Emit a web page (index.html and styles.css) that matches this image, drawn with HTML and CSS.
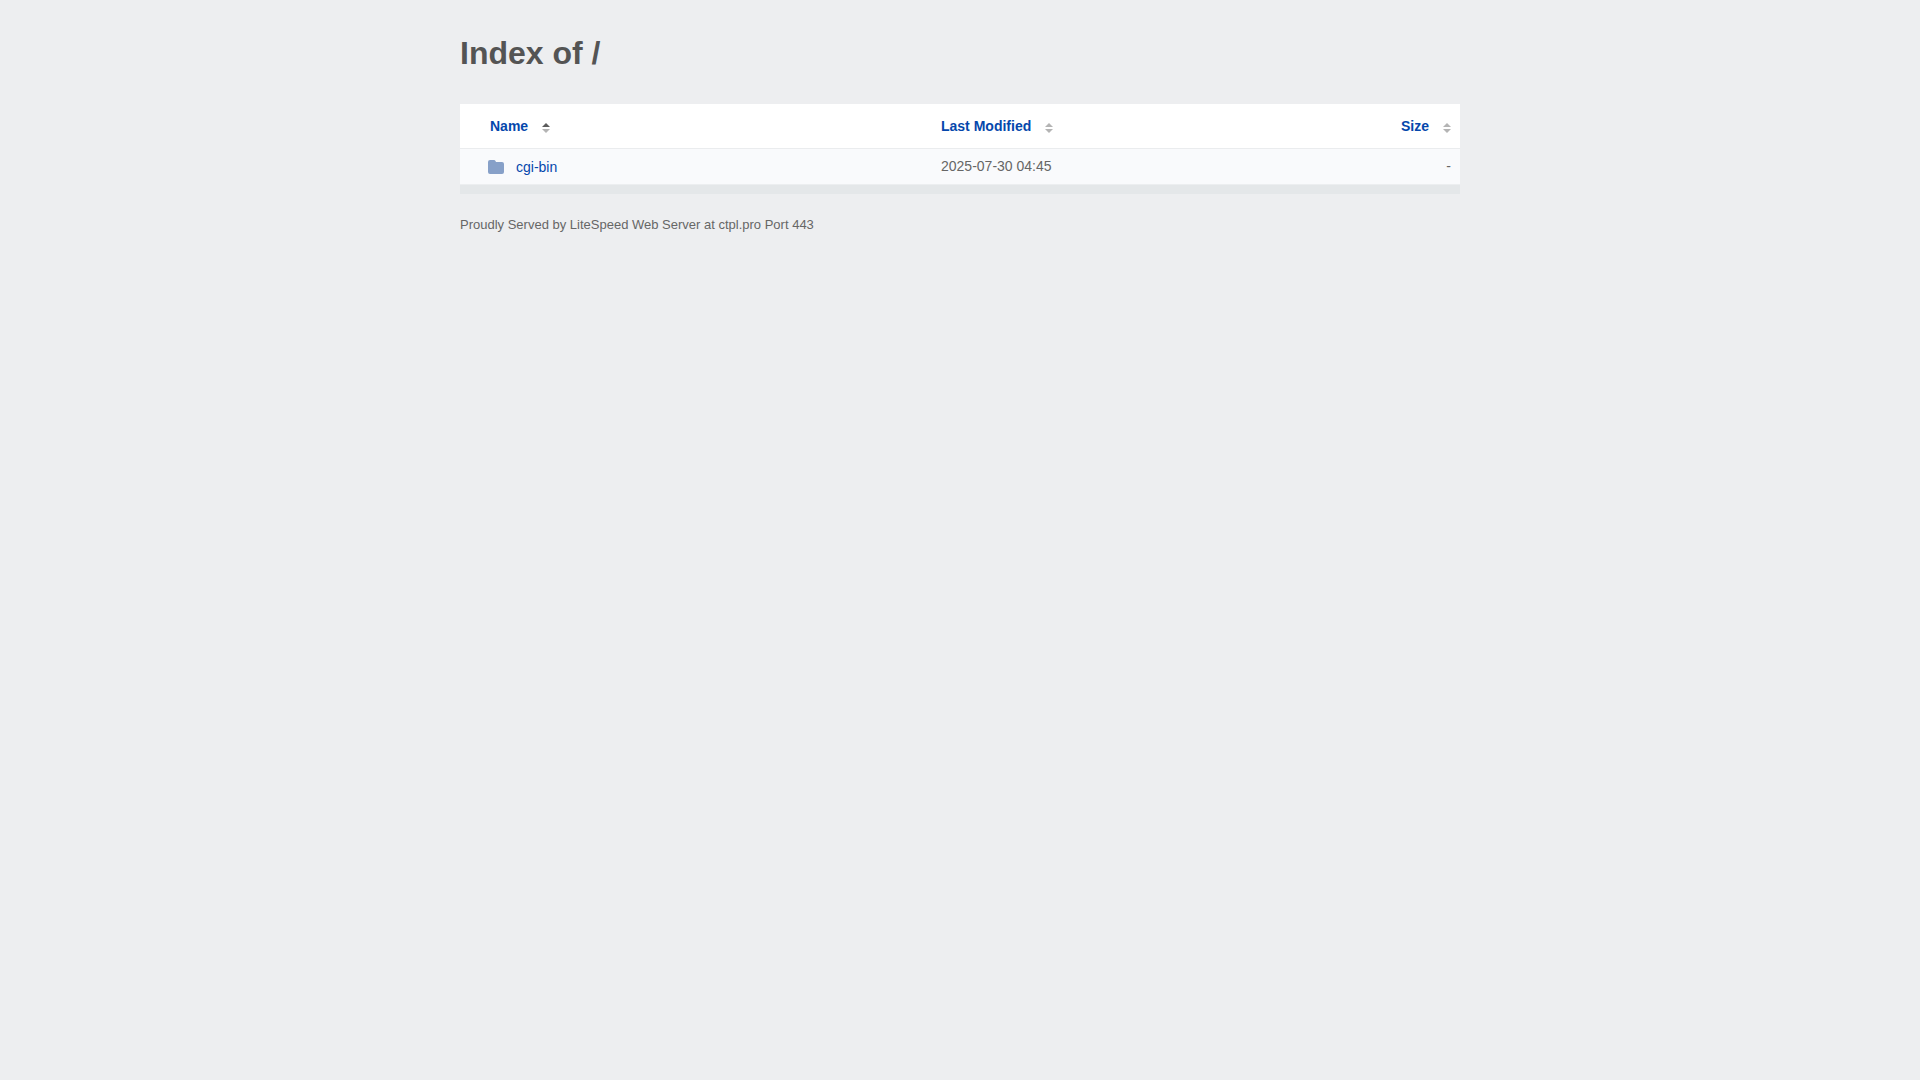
FILE: index.html
```html
<!DOCTYPE html>
<html lang="en">
<head>
<meta charset="utf-8">
<meta name="viewport" content="width=device-width, initial-scale=1">
<title>Index of /</title>
<link rel="stylesheet" href="styles.css">
</head>
<body>
<div class="content">
  <h1>Index of /</h1>
  <table id="table-content">
    <thead>
      <tr class="t-header">
        <th class="colname" aria-sort="ascending"><a class="name" href="?ND">Name<svg class="sort asc" viewBox="0 0 8 10" aria-hidden="true"><path class="up" d="M0 4L4 0L8 4z"/><path d="M0 6H8L4 10z"/></svg></a></th>
        <th class="colmod"><a href="?MA">Last Modified<svg class="sort" viewBox="0 0 8 10" aria-hidden="true"><path class="up" d="M0 4L4 0L8 4z"/><path d="M0 6H8L4 10z"/></svg></a></th>
        <th class="colsize"><a href="?SA">Size<svg class="sort" viewBox="0 0 8 10" aria-hidden="true"><path class="up" d="M0 4L4 0L8 4z"/><path d="M0 6H8L4 10z"/></svg></a></th>
      </tr>
    </thead>
    <tbody>
      <tr>
        <td class="colname"><a href="/cgi-bin/"><svg class="icon" viewBox="0 0 16 16" aria-hidden="true"><path d="M2 1H6Q7 1 7.5 2L8 3H14Q16 3 16 5V13Q16 15 14 15H2Q0 15 0 13V3Q0 1 2 1z"/></svg>cgi-bin</a></td>
        <td class="colmod">2025-07-30 04:45</td>
        <td class="colsize">-</td>
      </tr>
    </tbody>
  </table>
  <address>Proudly Served by LiteSpeed Web Server at ctpl.pro Port 443</address>
</div>
</body>
</html>
```

FILE: styles.css
```css
* { box-sizing: border-box; }

body {
  margin: 0;
  background: #edeef0;
  color: #545454;
  font: 14px/20px "Liberation Sans", Arial, sans-serif;
}

.content { max-width: 1000px; margin: 0 auto; }

h1 { margin: 0; padding: 33px 0 31px; font-size: 32px; line-height: 40px; }

a { color: #0547ac; text-decoration: none; }
a:hover { text-decoration: underline; }

table { width: 100%; border-spacing: 0; background: #fff; border-bottom: 9px solid #e4e7e9; }
th, td { padding: 7px 9px 8px; text-align: left; vertical-align: top; }
th { padding: 12px 9px; border-bottom: 1px solid #eaecee; }
td { background: #f9fafc; border-bottom: 1px solid #eceef0; color: #666; }

th.colname, td.colname { width: 48%; padding-left: 30px; }
th.colmod, td.colmod { padding-left: 1px; }
th.colsize, td.colsize { text-align: right; }
td.colname { padding-top: 8px; padding-bottom: 7px; }

/* sort arrows, the active direction is darker */
.sort { width: 8px; height: 10px; margin-left: 14px; vertical-align: -2px; fill: #b4b4b4; }
.sort.asc .up { fill: #5c5c5c; }

.icon { width: 16px; height: 16px; margin: 0 12px 0 -2px; fill: #87a0c8; vertical-align: -3px; }

address { margin-top: 21px; color: #666; font-size: 13px; font-style: normal; }
```
